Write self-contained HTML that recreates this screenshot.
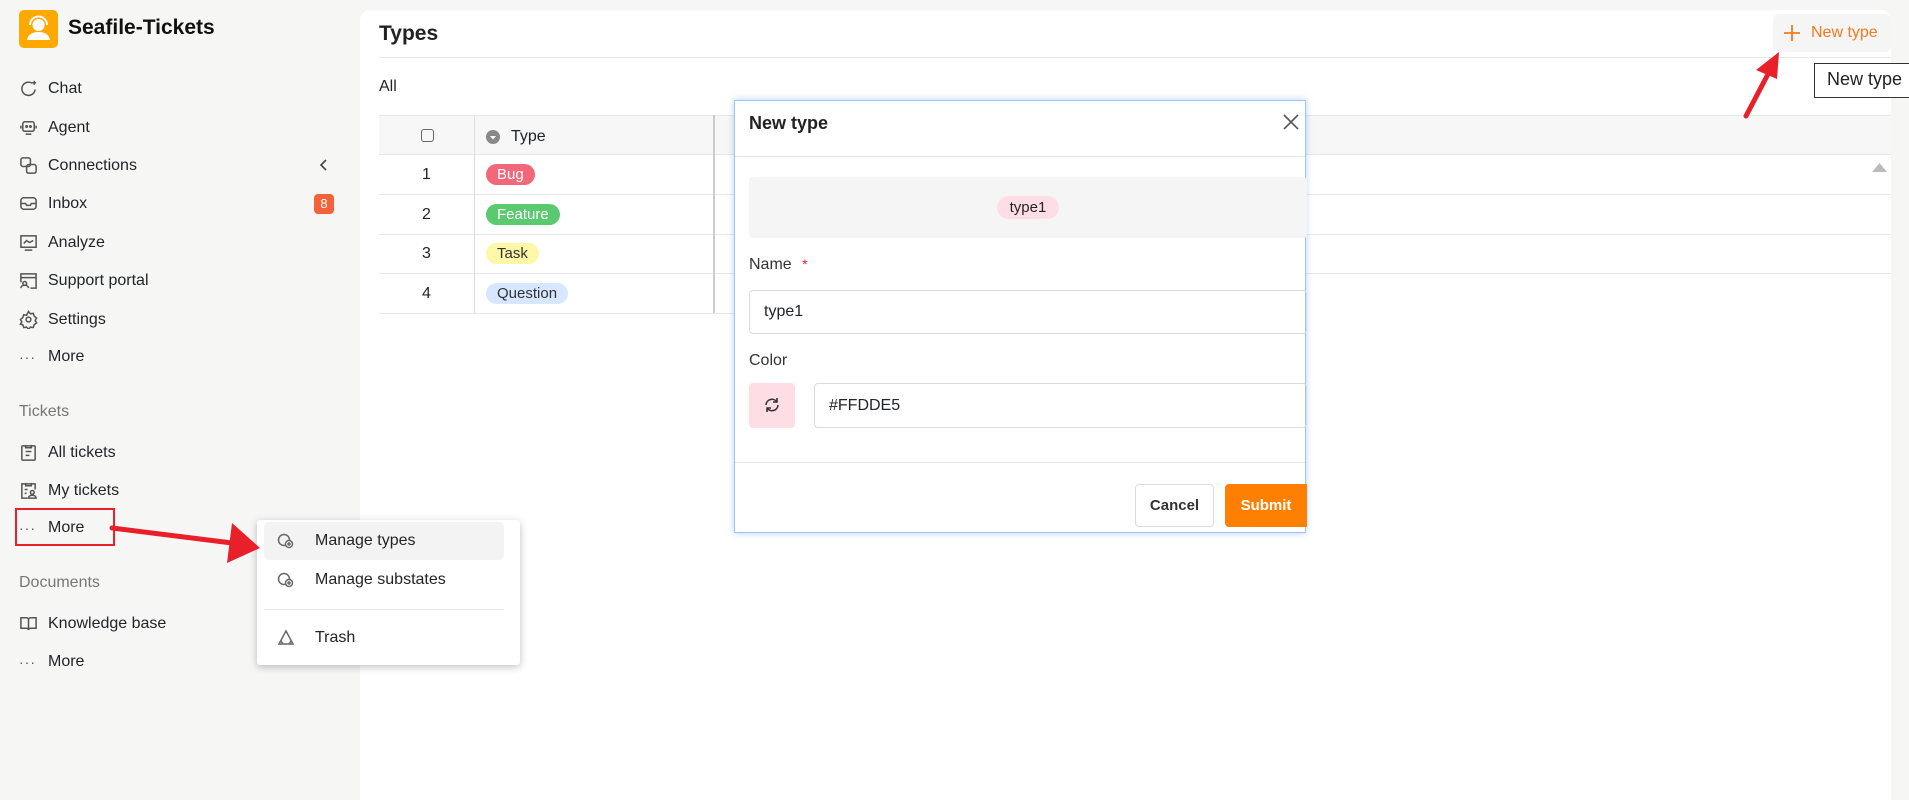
<!DOCTYPE html>
<html><head><meta charset="utf-8"><style>
*{box-sizing:border-box;margin:0;padding:0}
body{width:1909px;height:786px;background:#f6f6f5;font-family:"Liberation Sans",sans-serif;color:#212529;position:relative;overflow:hidden;font-size:16px}
.abs{position:absolute}
.nav{position:absolute;left:19px;display:flex;align-items:center;font-size:16px;color:#212529}
.nav svg{width:19px;height:19px;margin-right:10px;fill:none;stroke:#555;stroke-width:1.6}
.sec{position:absolute;left:19px;color:#777;font-size:16px}
.card{position:absolute;left:360px;top:10px;width:1531px;height:790px;background:#fff;border-radius:10px 10px 0 0}
.tag{display:inline-block;border-radius:12px;padding:2px 11px;font-size:15px}
.row{position:absolute;left:379px;width:1512px;height:40px;border-bottom:1px solid #e8e8e8}
.row .n{position:absolute;left:0;width:95px;text-align:center;top:11px;font-size:16px}
.row .t{position:absolute;left:107px;top:9px}
.vl{position:absolute;width:1px;background:#ddd}
.mi{position:absolute;left:266px;width:243px;height:40px;display:flex;align-items:center;padding-left:11px;font-size:16px}
.mi svg{width:18px;height:18px;margin-right:20px;fill:none;stroke:#666;stroke-width:1.5}
</style></head><body>
<!-- logo -->
<div class="abs" style="left:19px;top:10px;width:39px;height:38px;background:#ffa800;border-radius:5px">
<svg width="39" height="38" viewBox="0 0 39 38"><circle cx="19.5" cy="15" r="6" fill="#fff"/><path d="M11 15a8.5 8.5 0 0 1 17 0" stroke="#fff" stroke-width="2" fill="none"/><path d="M8 30c1-6 6-8 11.5-8S30 24 31 30z" fill="#fff"/></svg></div>
<div class="abs" style="left:68px;top:16px;font-size:21px;font-weight:bold;color:#111">Seafile-Tickets</div>

<div class="nav" style="top:79px"><svg viewBox="0 0 20 20"><path d="M14 4.5A7 7 0 1 0 17 11"/><path d="M16 2v4M14 4h4"/></svg>Chat</div>
<div class="nav" style="top:118px"><svg viewBox="0 0 20 20"><rect x="4" y="4" width="12" height="10" rx="2"/><path d="M2 8v3M18 8v3M7 17h6"/><circle cx="8" cy="9" r=".8" fill="#555"/><circle cx="12" cy="9" r=".8" fill="#555"/></svg>Agent</div>
<div class="nav" style="top:156px"><svg viewBox="0 0 20 20"><rect x="2" y="2" width="10" height="9" rx="2"/><rect x="8" y="9" width="10" height="9" rx="2"/></svg>Connections</div>
<div class="nav" style="top:194px"><svg viewBox="0 0 20 20"><rect x="2" y="4" width="16" height="12" rx="3"/><path d="M2 10h5l1 2h4l1-2h5"/></svg>Inbox</div>
<div class="nav" style="top:233px"><svg viewBox="0 0 20 20"><rect x="2" y="3" width="16" height="12"/><path d="M5 11l3-3 3 2 4-2M6 18h8"/></svg>Analyze</div>
<div class="nav" style="top:271px"><svg viewBox="0 0 20 20"><path d="M2 12V3h16v15h-6M2 7h16"/><circle cx="6" cy="13" r="2"/><path d="M2 18c0-2 2-3 4-3s4 1 4 3"/></svg>Support portal</div>
<div class="nav" style="top:310px"><svg viewBox="0 0 20 20"><path d="M10 1.5l2 2.5 3-.5 1 3 2.5 2-1.5 2.5 1.5 2.5-2.5 2-1 3-3-.5-2 2.5-2-2.5-3 .5-1-3L1.5 15 3 12.5 1.5 10 4 8l1-3 3 .5z"/><circle cx="10" cy="10" r="2.5"/></svg>Settings</div>
<div class="nav" style="top:348px"><span style="width:19px;margin-right:10px;letter-spacing:1px;color:#555;font-size:14px">···</span>More</div>
<svg class="abs" style="left:318px;top:158px" width="12" height="14"><path d="M8 2L3 7l5 5" stroke="#444" stroke-width="1.6" fill="none"/></svg>
<div class="abs" style="left:314px;top:194px;width:20px;height:20px;background:#f4623a;border-radius:4px;color:#fff;font-size:13px;text-align:center;line-height:20px">8</div>

<div class="sec" style="top:403px">Tickets</div>
<div class="nav" style="top:443px"><svg viewBox="0 0 20 20"><rect x="3" y="3" width="14" height="15" rx="1"/><path d="M7 2v3h6V2M7 9h6M7 13h4"/></svg>All tickets</div>
<div class="nav" style="top:481px"><svg viewBox="0 0 20 20"><path d="M9 18H3V3h14v6M7 2v3h6V2M6 9h3M6 13h2"/><circle cx="14" cy="12" r="2"/><path d="M10 18c0-2 2-3 4-3s4 1 4 3z"/></svg>My tickets</div>
<div class="nav" style="top:519px"><span style="width:19px;margin-right:10px;letter-spacing:1px;color:#555;font-size:14px">···</span>More</div>
<div class="abs" style="left:15px;top:508px;width:100px;height:38px;border:2px solid #e8202a"></div>
<div class="sec" style="top:574px">Documents</div>
<div class="nav" style="top:614px"><svg viewBox="0 0 20 20"><path d="M2 4h6a2 2 0 0 1 2 2v11a2 2 0 0 0-2-2H2zM18 4h-6a2 2 0 0 0-2 2v11a2 2 0 0 1 2-2h6z"/></svg>Knowledge base</div>
<div class="nav" style="top:653px"><span style="width:19px;margin-right:10px;letter-spacing:1px;color:#555;font-size:14px">···</span>More</div>

<!-- main card -->
<div class="card"></div>
<div class="abs" style="left:379px;top:22px;font-size:21px;font-weight:bold;color:#222">Types</div>
<div class="abs" style="left:379px;top:57px;width:1512px;height:1px;background:#e8e8e8"></div>
<div class="abs" style="left:379px;top:78px;font-size:16px">All</div>
<div class="abs" style="left:1773px;top:14px;width:118px;height:38px;background:#f5f5f5;border-radius:6px"></div>
<svg class="abs" style="left:1783px;top:24px" width="18" height="18"><path d="M9 1v16M1 9h16" stroke="#f47a1f" stroke-width="1.8"/></svg>
<div class="abs" style="left:1811px;top:24px;font-size:16px;color:#f47a1f">New type</div>
<div class="abs" style="left:1814px;top:63px;width:100px;height:35px;border:1.5px solid #333;background:#fff;font-size:18px;padding:5px 0 0 12px;color:#222;white-space:nowrap">New type</div>

<!-- table -->
<div class="abs" style="left:379px;top:115px;width:1512px;height:40px;background:#f7f7f7;border-top:1px solid #e8e8e8;border-bottom:1px solid #e8e8e8"></div>
<div class="abs" style="left:421px;top:129px;width:13px;height:13px;border:1.5px solid #666;border-radius:3px"></div>
<svg class="abs" style="left:486px;top:130px" width="14" height="14"><circle cx="7" cy="7" r="7" fill="#888"/><path d="M4 6h6l-3 3.5z" fill="#fff"/></svg>
<div class="abs" style="left:511px;top:128px;font-size:16px">Type</div>
<div class="row" style="top:155px"><div class="n">1</div><div class="t"><span class="tag" style="background:#f2677a;color:#fff">Bug</span></div></div>
<div class="row" style="top:195px"><div class="n">2</div><div class="t"><span class="tag" style="background:#5ac96f;color:#fff">Feature</span></div></div>
<div class="row" style="top:234px"><div class="n">3</div><div class="t"><span class="tag" style="background:#fdf7a8;color:#333">Task</span></div></div>
<div class="row" style="top:274px;width:360px"><div class="n">4</div><div class="t"><span class="tag" style="background:#d6e7ff;color:#333">Question</span></div></div>
<div class="vl" style="left:474px;top:115px;height:198px"></div>
<div class="vl" style="left:713px;top:115px;height:198px;width:2px;background:#ccc"></div>
<svg class="abs" style="left:1871px;top:162px" width="17" height="11"><path d="M1 10L8.5 1 16 10z" fill="#bbb"/></svg>

<!-- menu -->
<div class="abs" style="left:257px;top:520px;width:263px;height:145px;background:#fff;box-shadow:0 2px 8px rgba(0,0,0,.25);border-radius:3px"></div>
<div class="abs" style="left:264px;top:522px;width:240px;height:38px;background:#f3f3f3;border-radius:5px"></div>
<div class="mi" style="top:521px"><svg viewBox="0 0 18 18"><circle cx="7" cy="8" r="5.5"/><circle cx="12" cy="12" r="3.5" fill="#fff"/><circle cx="12" cy="12" r="1"/></svg>Manage types</div>
<div class="mi" style="top:560px"><svg viewBox="0 0 18 18"><circle cx="7" cy="8" r="5.5"/><circle cx="12" cy="12" r="3.5" fill="#fff"/><circle cx="12" cy="12" r="1"/></svg>Manage substates</div>
<div class="abs" style="left:264px;top:609px;width:240px;height:1px;background:#e5e5e5"></div>
<div class="mi" style="top:618px"><svg viewBox="0 0 18 18"><path d="M9 2L2 15h14zM6 15l-2-3M12 15l2-3"/></svg>Trash</div>

<!-- red arrows -->
<svg class="abs" style="left:0;top:0" width="1909" height="786">
<path d="M112 528L232 543" stroke="#e8202a" stroke-width="5" stroke-linecap="round"/>
<path d="M260 548L232 523 227 563z" fill="#e8202a"/>
<path d="M1746 116L1767 76" stroke="#e8202a" stroke-width="5" stroke-linecap="round"/>
<path d="M1779 52L1756 70 1777 79z" fill="#e8202a"/>
</svg>

<!-- modal -->
<div class="abs" style="left:734px;top:100px;width:572px;height:433px;background:#fff;border:1.5px solid #9fc6f7;box-shadow:0 0 6px rgba(100,160,240,.5)">
<div class="abs" style="left:14px;top:12px;font-size:18px;font-weight:bold;color:#222">New type</div>
<svg class="abs" style="left:547px;top:12px" width="18" height="18"><path d="M2 2l14 14M16 2L2 16" stroke="#555" stroke-width="1.6"/></svg>
<div class="abs" style="left:0;top:55px;width:100%;height:1px;background:#e4e6ea"></div>
<div class="abs" style="left:14px;top:76px;width:558px;height:61px;background:#f5f5f5;border-radius:4px"></div>
<div class="abs" style="left:262px;top:95px;width:62px;height:23px;background:#ffdde5;border-radius:12px;font-size:15px;text-align:center;line-height:23px">type1</div>
<div class="abs" style="left:14px;top:155px;font-size:16px;color:#333">Name <span style="color:#e8202a;margin-left:6px;font-size:14px">*</span></div>
<div class="abs" style="left:14px;top:189px;width:558px;height:44px;border:1px solid #dcdcdc;border-radius:4px;font-size:16px;padding:12px 0 0 14px">type1</div>
<div class="abs" style="left:14px;top:251px;font-size:16px;color:#333">Color</div>
<div class="abs" style="left:14px;top:282px;width:46px;height:45px;background:#ffdde5;border-radius:4px"></div>
<svg class="abs" style="left:28px;top:295px" width="18" height="18" viewBox="0 0 18 18"><path d="M3 9a6 6 0 0 1 11-3M15 9a6 6 0 0 1-11 3" stroke="#333" stroke-width="1.6" fill="none"/><path d="M14 2v4h-4M4 16v-4h4" stroke="#333" stroke-width="1.6" fill="none"/></svg>
<div class="abs" style="left:79px;top:282px;width:493px;height:45px;border:1px solid #dcdcdc;border-radius:4px;font-size:16px;padding:13px 0 0 14px">#FFDDE5</div>
<div class="abs" style="left:0;top:361px;width:100%;height:1px;background:#e4e6ea"></div>
<div class="abs" style="left:400px;top:383px;width:79px;height:43px;border:1px solid #ddd;border-radius:4px;font-size:15px;font-weight:bold;text-align:center;line-height:41px;color:#333">Cancel</div>
<div class="abs" style="left:490px;top:383px;width:82px;height:43px;background:#ff8000;border-radius:4px 0 0 4px;font-size:15px;font-weight:bold;color:#fff;text-align:center;line-height:43px">Submit</div>
</div>
</body></html>
